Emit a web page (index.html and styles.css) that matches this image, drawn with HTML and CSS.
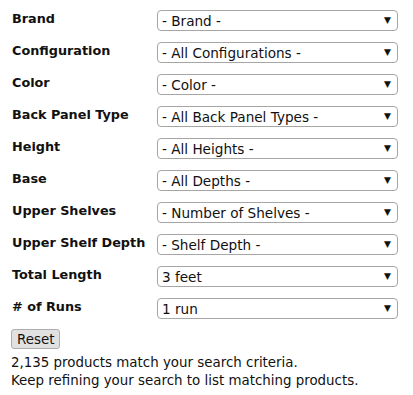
FILE: index.html
```html
<!DOCTYPE html>
<html lang="en">
<head>
    <meta charset="UTF-8">
    <meta name="viewport" content="width=device-width, initial-scale=1.0">
    <title>search</title>
    <link rel="stylesheet" href="styles.css">
</head>
<body>
    <form class="filters">
        <div class="row">
            <label>Brand</label>
            <div class="pick"><select><option>- Brand -</option></select><span class="arrow">▼</span></div>
        </div>
        <div class="row">
            <label>Configuration</label>
            <div class="pick"><select><option>- All Configurations -</option></select><span class="arrow">▼</span></div>
        </div>
        <div class="row">
            <label>Color</label>
            <div class="pick"><select><option>- Color -</option></select><span class="arrow">▼</span></div>
        </div>
        <div class="row">
            <label>Back Panel Type</label>
            <div class="pick"><select><option>- All Back Panel Types -</option></select><span class="arrow">▼</span></div>
        </div>
        <div class="row">
            <label>Height</label>
            <div class="pick"><select><option>- All Heights -</option></select><span class="arrow">▼</span></div>
        </div>
        <div class="row">
            <label>Base</label>
            <div class="pick"><select><option>- All Depths -</option></select><span class="arrow">▼</span></div>
        </div>
        <div class="row">
            <label>Upper Shelves</label>
            <div class="pick"><select><option>- Number of Shelves -</option></select><span class="arrow">▼</span></div>
        </div>
        <div class="row">
            <label>Upper Shelf Depth</label>
            <div class="pick"><select><option>- Shelf Depth -</option></select><span class="arrow">▼</span></div>
        </div>
        <div class="row">
            <label>Total Length</label>
            <div class="pick"><select><option>3 feet</option></select><span class="arrow">▼</span></div>
        </div>
        <div class="row">
            <label># of Runs</label>
            <div class="pick"><select><option>1 run</option></select><span class="arrow">▼</span></div>
        </div>

        <button type="reset">Reset</button>
        <p class="count">2,135 products match your search criteria.<br>Keep refining your search to list matching products.</p>
    </form>
</body>
</html>
```

FILE: styles.css
```css
body {
    margin: 0;
    background-color: #fff;
    color: #000;
    font-family: "DejaVu Sans", Verdana, sans-serif;
    font-size: 13.4px;
}

.filters {
    padding: 10px 15px 0 11px;
}

.row {
    display: grid;
    grid-template-columns: 146px 241px;
    align-items: center;
    height: 21px;
    margin-bottom: 11px;
}

label {
    font-weight: bold;
    font-size: 12.8px;
    color: #111;
    padding-left: 1px;
    margin-top: -5px;
}

.pick {
    position: relative;
}

select {
    appearance: none;
    -webkit-appearance: none;
    width: 100%;
    height: 21px;
    padding: 0 0 0 4px;
    border: 1px solid #a6a6a6;
    border-radius: 4px;
    background-color: #fff;
    color: #111;
    font-family: "DejaVu Sans", Verdana, sans-serif;
    font-size: 13.6px;
}

.arrow {
    position: absolute;
    right: 7px;
    top: 5px;
    font-size: 9px;
    color: #111;
    pointer-events: none;
}

button {
    margin-top: -1px;
    height: 20px;
    padding: 0 5px;
    background-color: #e1e1e1;
    border: 1px solid #adadad;
    border-radius: 3px;
    color: #111;
    font-family: "DejaVu Sans", Verdana, sans-serif;
    font-size: 13.4px;
}

.count {
    margin: 5px 0 0;
    line-height: 18px;
    color: #111;
}
```
